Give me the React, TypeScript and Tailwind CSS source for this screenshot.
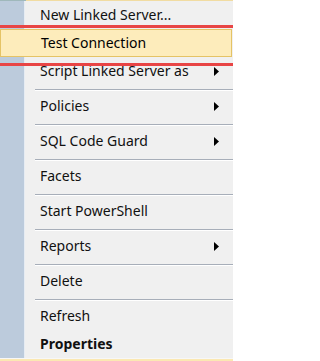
import React from 'react'

type Item = { label: string; sub?: boolean; bold?: boolean; sepAfter?: boolean; active?: boolean }

const items: Item[] = [
  { label: 'New Linked Server...' },
  { label: 'Test Connection', active: true },
  { label: 'Script Linked Server as', sub: true, sepAfter: true },
  { label: 'Policies', sub: true, sepAfter: true },
  { label: 'SQL Code Guard', sub: true, sepAfter: true },
  { label: 'Facets', sepAfter: true },
  { label: 'Start PowerShell', sepAfter: true },
  { label: 'Reports', sub: true, sepAfter: true },
  { label: 'Delete', sepAfter: true },
  { label: 'Refresh' },
  { label: 'Properties', bold: true },
]

function Arrow() {
  return (
    <svg width="5" height="9" viewBox="0 0 5 9" className="shrink-0">
      <path d="M0 0 L5 4.5 L0 9 Z" fill="#000" />
    </svg>
  )
}

function Row({ item }: { item: Item }) {
  if (item.active) {
    return (
      <div className="flex h-[28px] w-[232px] items-center border border-[#e5c365] bg-[#fdecbb] text-[#000]">
        <span className="pl-[40px]">{item.label}</span>
      </div>
    )
  }
  return (
    <div className="flex h-[28px]">
      <div className="w-[25px] shrink-0 border-r border-[#e6ecf3] bg-[#bccbdc]" />
      <div className="flex flex-1 items-center pl-[15px] pr-[14px]">
        <span className={item.bold ? 'flex-1 font-bold' : 'flex-1'}>{item.label}</span>
        {item.sub && <Arrow />}
      </div>
    </div>
  )
}

function Separator() {
  return (
    <div className="flex h-[7px]">
      <div className="w-[25px] shrink-0 border-r border-[#e6ecf3] bg-[#bccbdc]" />
      <div className="flex-1 pl-[10px] pt-[4px]">
        <div className="h-px bg-[#a7aeb9]" />
        <div className="h-px bg-white" />
      </div>
    </div>
  )
}

export default function App() {
  return (
    <div
      className="relative h-[361px] w-[233px] overflow-hidden bg-[#f0f0f0] text-[14px] leading-none text-[#111]"
      style={{ fontFamily: '"Noto Sans", "Open Sans", sans-serif' }}
    >
      <div className="flex h-px">
        <div className="w-[26px] bg-[#9fb8bb]" />
        <div className="flex-1 bg-[#f1dca2]" />
      </div>
      {items.map((it) => (
        <React.Fragment key={it.label}>
          <Row item={it} />
          {it.sepAfter && <Separator />}
        </React.Fragment>
      ))}
      <div className="h-px bg-[#f7f7f7]" />
      <div className="h-[2px] bg-[#fbe8b2]" />

      {/* red annotation box around the highlighted row */}
      <div className="pointer-events-none absolute left-0 right-0 top-[25px] h-[3px] bg-[#e84545]" />
      <div className="pointer-events-none absolute left-0 right-0 top-[63px] h-[3px] bg-[#e84545]" />
    </div>
  )
}
